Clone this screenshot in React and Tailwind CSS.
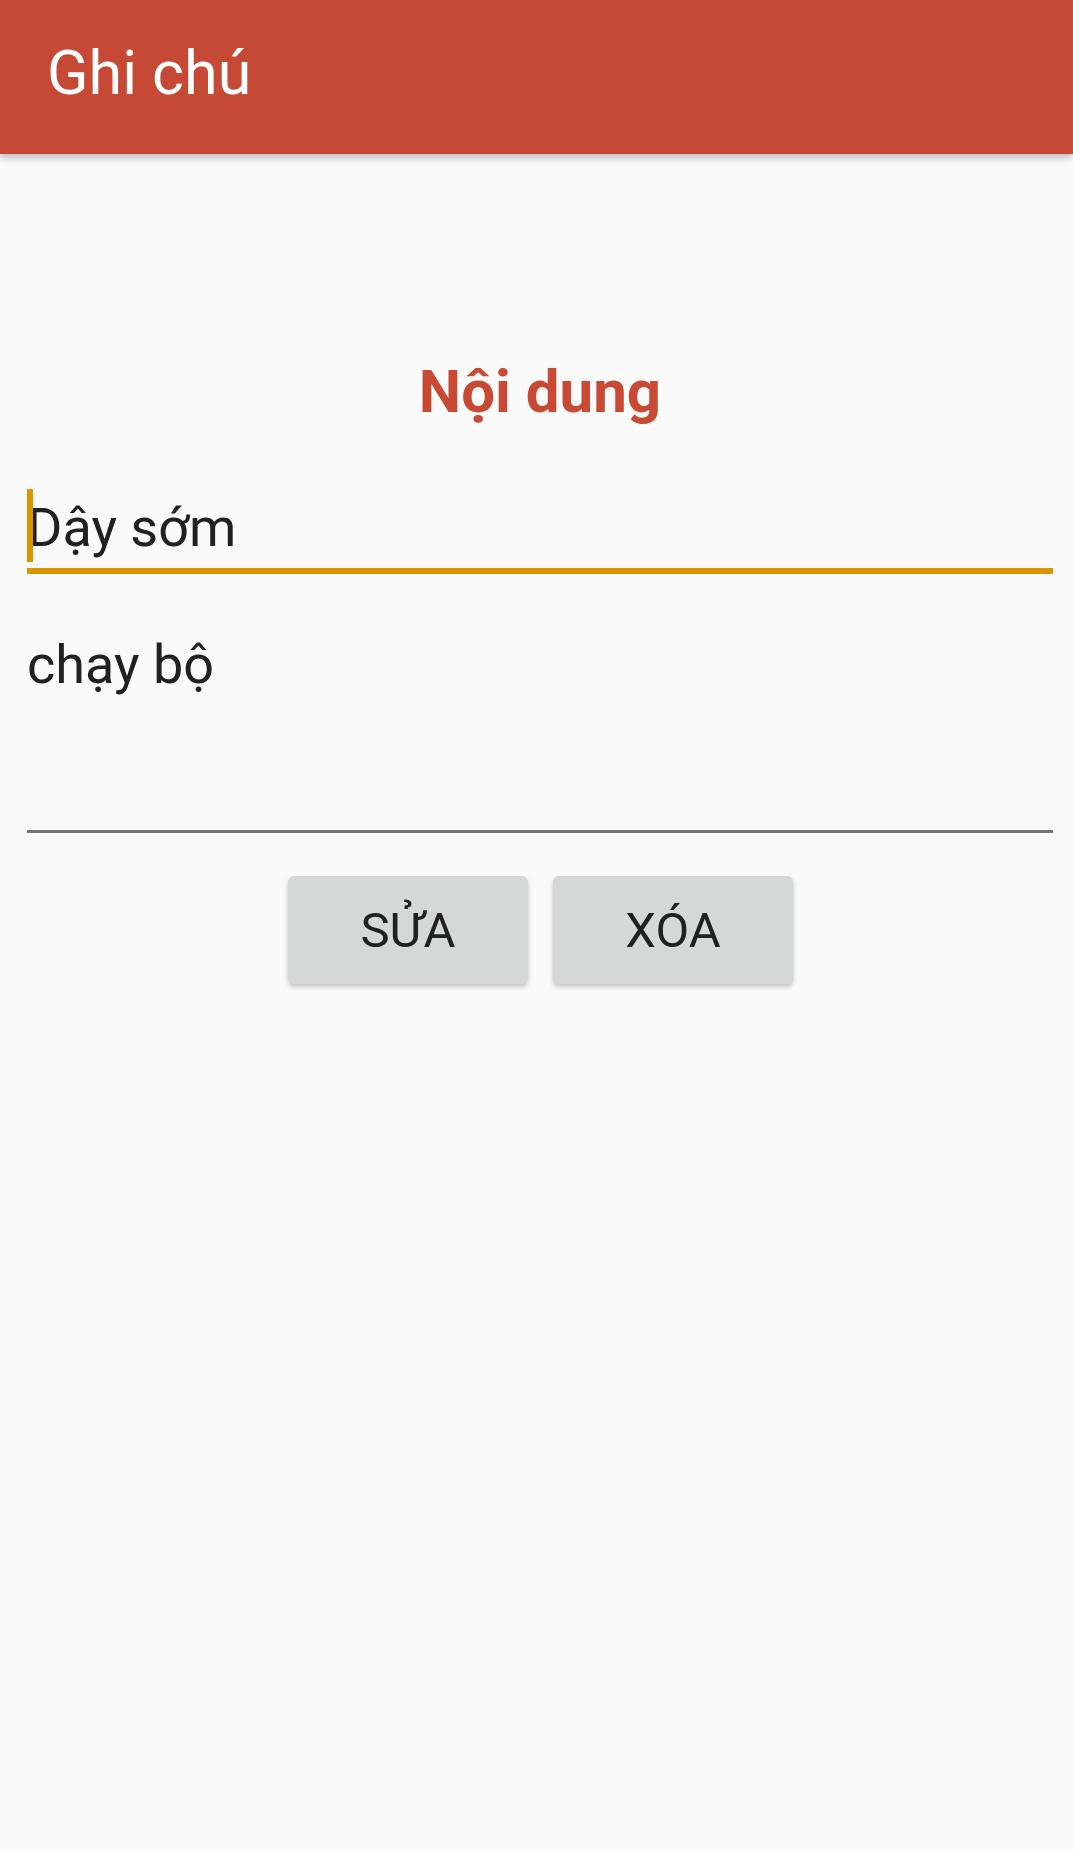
import React from 'react';

export default function App() {
    const font = { fontFamily: 'Roboto, "Noto Sans", sans-serif' };

    return (
        <div className="w-[1073px] h-[1852px] bg-[#fafafa] flex flex-col" style={font}>
            {/* Toolbar */}
            <div className="h-[154px] shrink-0 bg-[#c54935] shadow-[0_3px_8px_rgba(0,0,0,0.28)] pl-[47px] pt-[37px] z-10">
                <div className="text-white text-[61px] leading-[72px] font-normal">Ghi chú</div>
            </div>

            {/* Form */}
            <div className="flex flex-col pl-[27px] pr-[20px]">
                <div className="mt-[203px] text-center text-[#c84a35] text-[60px] leading-[70px] font-bold">Nội dung</div>

                {/* Title input (focused) */}
                <div className="mt-[62px] flex flex-col">
                    <div className="relative pt-[7px]">
                        <span className="absolute left-0 top-0 w-[6px] h-[73px] bg-[#db9500]"></span>
                        <div className="text-[54px] leading-[64px] text-[#212121]">Dậy sớm</div>
                    </div>
                    <div className="mt-[8px] h-[6px] bg-[#db9500]"></div>
                </div>

                {/* Content input */}
                <div className="mt-[59px] flex flex-col">
                    <div className="text-[54px] leading-[64px] text-[#212121] h-[197px]">chạy bộ</div>
                    <div className="h-[3px] bg-[#757575]"></div>
                </div>

                {/* Buttons */}
                <div className="mt-[43px] flex gap-[25px] ml-[261px]">
                    <button className="w-[240px] h-[108px] rounded-[6px] bg-[#d6d7d7] shadow-[0_3px_5px_rgba(0,0,0,0.22)] text-[49px] leading-none text-[#212121] flex items-center justify-center">
                        SỬA
                    </button>
                    <button className="w-[240px] h-[108px] rounded-[6px] bg-[#d6d7d7] shadow-[0_3px_5px_rgba(0,0,0,0.22)] text-[49px] leading-none text-[#212121] flex items-center justify-center">
                        XÓA
                    </button>
                </div>
            </div>
        </div>
    );
}
